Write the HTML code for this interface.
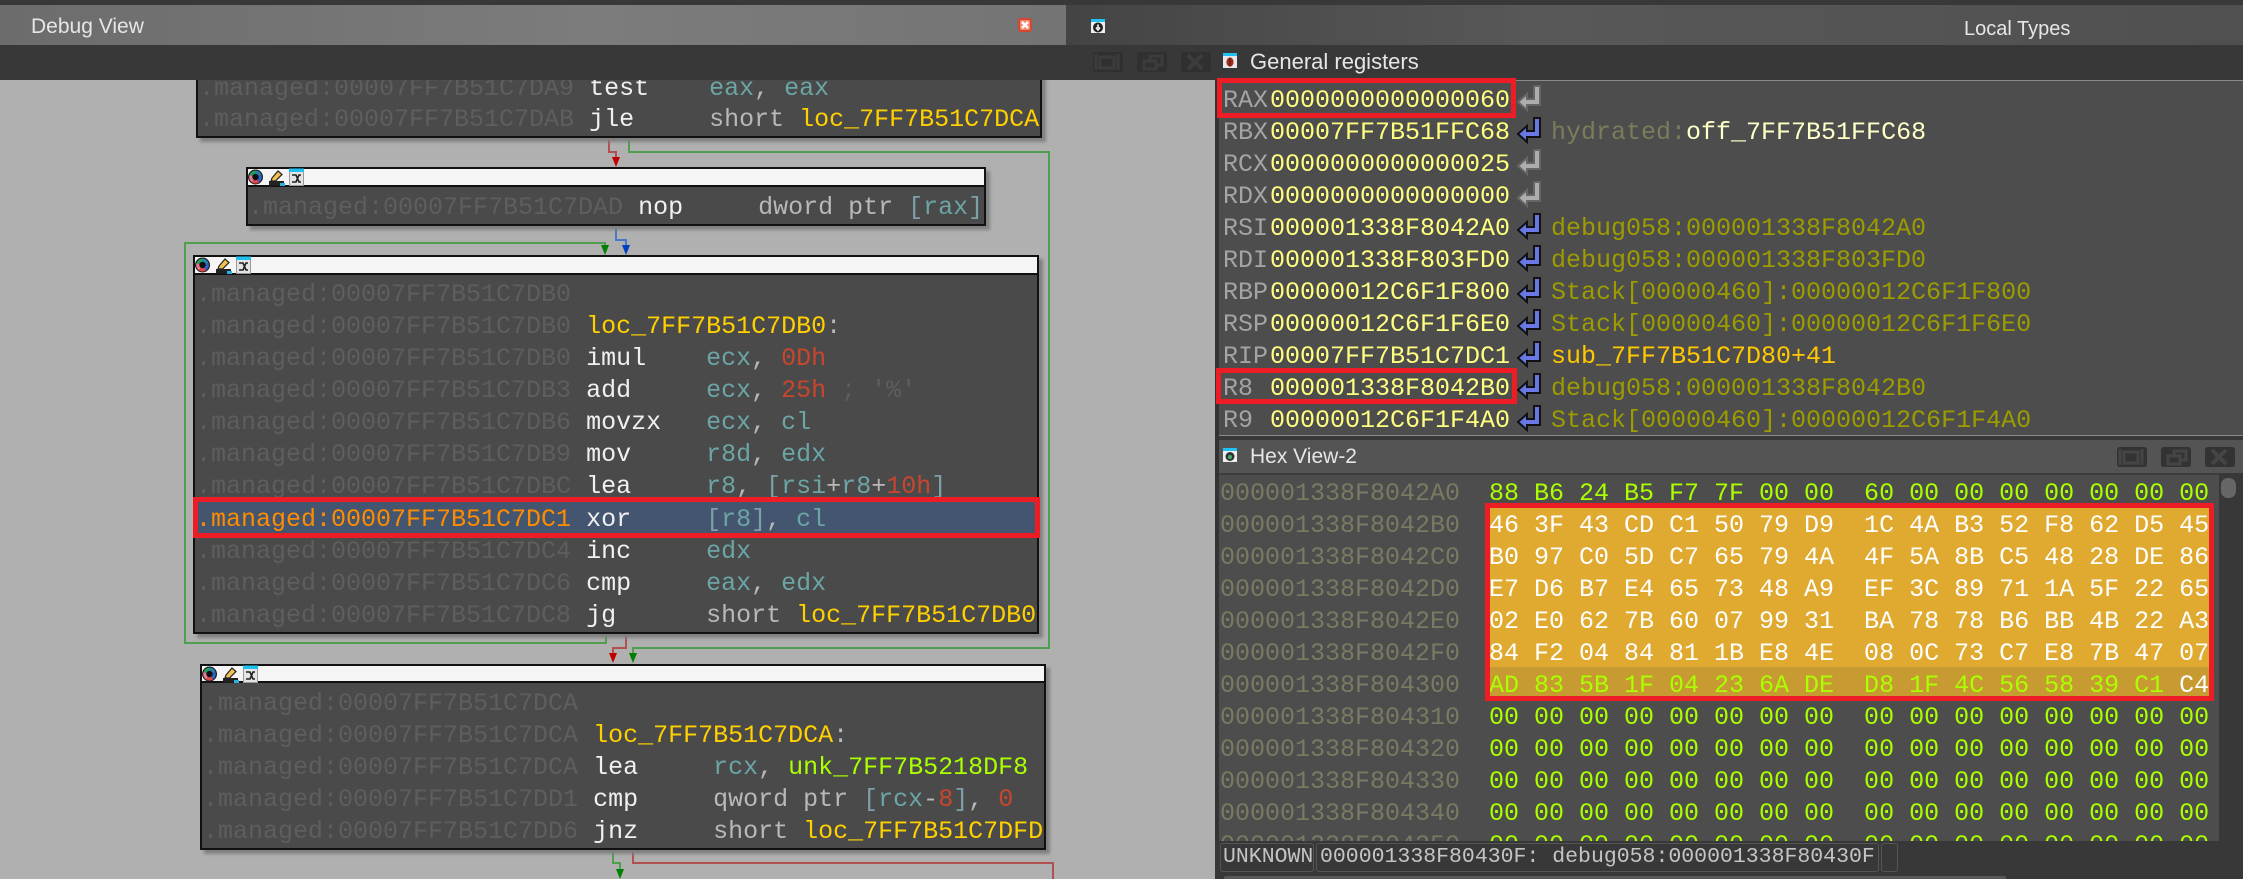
<!DOCTYPE html>
<html><head><meta charset="utf-8"><style>
html,body{margin:0;padding:0;background:#b0b0b0}
#p{position:relative;width:2243px;height:879px;overflow:hidden;background:#b0b0b0;font-family:"Liberation Mono",monospace}
.abs{position:absolute}
.node{position:absolute;background:#4a4a4a;border:2px solid #111;box-sizing:border-box;box-shadow:4px 4px 3px #808080}
.hd{position:absolute;background:#f5f5f5;box-sizing:border-box;border:2px solid #111}
.r{position:absolute;white-space:pre;height:32px;line-height:32px;font-size:25px;color:#f0f0f0}
.a{color:#5e5e5e}.g{color:#6ba5a5}.n{color:#c8462c}.l{color:#ffd000}.t{color:#b8b8b8}.b{color:#7f9fa8}.c{color:#5e5e5e}.u{color:#aaff00}.o{color:#ff8c00}
.q{position:absolute;white-space:pre;height:32px;line-height:32px;font-size:25px}
.rn{color:#a4a4a4}.rv{color:#ffff80}.d{color:#9c9c00}.h{color:#7c7c5c}.w{color:#ffffc8}.s{color:#ffc800}
.x{color:#7a7a62}.y{color:#aaff00}.e{color:#fff}
.ui{position:absolute;font-family:"Liberation Sans",sans-serif;color:#e6e6e6;white-space:pre}
.box{position:absolute;box-sizing:border-box;border:5px solid #ee1c25}
.cell{position:absolute;box-sizing:border-box;border:1px solid #555;border-radius:3px;height:29px;top:843px;line-height:27px;font-size:21.5px;color:#c4c4c4;white-space:pre}
</style></head><body><div id="p">

<svg class="abs" style="left:0;top:0" width="1100" height="879" fill="none" stroke-width="2">
<polyline stroke="#b05050" points="609,137 609,152 616,152 616,158"/>
<polyline stroke="#4f9f4f" points="629,137 629,152 1049,152 1049,648 633,648 633,654"/>
<polyline stroke="#4a78c8" points="616,225 616,240 626,240 626,246"/>
<polyline stroke="#4f9f4f" points="606,633 606,643 185,643 185,243 605,243 605,246"/>
<polyline stroke="#b05050" points="626,633 626,648 613,648 613,654"/>
<polyline stroke="#4f9f4f" points="613,849 613,863 620,863 620,869"/>
<polyline stroke="#b05050" points="633,849 633,863 1053,863 1053,879"/>
<polygon fill="#c00000" stroke="none" points="612,157 620,157 616,167"/>
<polygon fill="#0040c0" stroke="none" points="622,245 630,245 626,255"/>
<polygon fill="#008000" stroke="none" points="601,245 609,245 605,255"/>
<polygon fill="#c00000" stroke="none" points="609,653 617,653 613,663"/>
<polygon fill="#008000" stroke="none" points="629,653 637,653 633,663"/>
<polygon fill="#008000" stroke="none" points="616,869 624,869 620,879"/>
</svg>

<svg width="0" height="0" style="position:absolute">
<symbol id="ic" viewBox="0 0 58 20">
<circle cx="7.5" cy="10" r="7.5" fill="#1a1a1a"/>
<path d="M7.5 3.5A6.5 6.5 0 0 0 1.5 8L7.5 10Z" fill="#20a060"/><path d="M7.5 3.5A6.5 6.5 0 0 1 13.5 8L7.5 10Z" fill="#2a80b0"/><path d="M13.5 8A6.5 6.5 0 0 1 11 15.5L7.5 10Z" fill="#3060c8"/><path d="M11 15.5A6.5 6.5 0 0 1 4 15.5L7.5 10Z" fill="#e04848"/><path d="M4 15.5A6.5 6.5 0 0 1 1.5 8L7.5 10Z" fill="#e87890"/>
<circle cx="7.5" cy="10" r="3.2" fill="#111"/>
<path d="M23 14L24 11L30 4L34 7.5L27.5 14Z" fill="#f0c050" stroke="#222" stroke-width="1.2"/>
<rect x="21" y="14" width="15" height="4.5" fill="#222"/><rect x="32" y="16" width="5" height="3" fill="#30b0e0"/>
<rect x="41.5" y="2.5" width="14" height="16" fill="#e4e4e4" stroke="#999"/><rect x="41" y="1.5" width="15" height="3.5" fill="#20c0f0"/>
<path d="M44 8L48 8L51 15L53 15M44 15L48 15L51 8L53 8" stroke="#222" stroke-width="1.6" fill="none"/>
</symbol>
<symbol id="ab" viewBox="0 0 27 28"><path d="M17 1H23V20H10V25L1 17L10 9V14H17Z" fill="#6a78e6" stroke="#111" stroke-width="2"/></symbol>
<symbol id="ag" viewBox="0 0 27 28"><path d="M17 1H23V20H10V25L1 17L10 9V14H17Z" fill="#aeaeae" stroke="#666" stroke-width="2"/></symbol>
<symbol id="bt" viewBox="0 0 120 20">
<path d="M2 3Q2 0 5 0H29Q32 0 32 3V17Q32 20 29 20H5Q2 20 2 17Z" />
<path d="M46 3Q46 0 49 0H73Q76 0 76 3V17Q76 20 73 20H49Q46 20 46 17Z"/>
<path d="M90 3Q90 0 93 0H117Q120 0 120 3V17Q120 20 117 20H93Q90 20 90 17Z"/>
</symbol>
</svg>

<!-- node 1 -->
<div class="node" style="left:196px;top:60px;width:846px;height:78px"></div>
<div class="r" style="left:199px;top:73px"><span class="a">.managed:00007FF7B51C7DA9</span> test    <span class="g">eax</span><span class="t">,</span> <span class="g">eax</span></div>
<div class="r" style="left:199px;top:104px"><span class="a">.managed:00007FF7B51C7DAB</span> jle     <span class="t">short</span> <span class="l">loc_7FF7B51C7DCA</span></div>

<!-- node 2 -->
<div class="node" style="left:246px;top:167px;width:740px;height:59px"></div>
<div class="hd" style="left:246px;top:167px;width:740px;height:20px"></div>
<svg class="abs" style="left:248px;top:167px" width="58" height="20"><use href="#ic"/></svg>
<div class="r" style="left:248px;top:192px"><span class="a">.managed:00007FF7B51C7DAD</span> nop     <span class="t">dword ptr</span> <span class="b">[</span><span class="g">rax</span><span class="b">]</span></div>

<!-- node 3 -->
<div class="node" style="left:193px;top:255px;width:846px;height:379px"></div>
<div class="hd" style="left:193px;top:255px;width:846px;height:20px"></div>
<svg class="abs" style="left:195px;top:255px" width="58" height="20"><use href="#ic"/></svg>
<div class="r" style="left:196px;top:279px"><span class="a">.managed:00007FF7B51C7DB0</span></div>
<div class="r" style="left:196px;top:311px"><span class="a">.managed:00007FF7B51C7DB0</span> <span class="l">loc_7FF7B51C7DB0</span><span class="t">:</span></div>
<div class="r" style="left:196px;top:343px"><span class="a">.managed:00007FF7B51C7DB0</span> imul    <span class="g">ecx</span><span class="t">,</span> <span class="n">0Dh</span></div>
<div class="r" style="left:196px;top:375px"><span class="a">.managed:00007FF7B51C7DB3</span> add     <span class="g">ecx</span><span class="t">,</span> <span class="n">25h</span> <span class="c">; '%'</span></div>
<div class="r" style="left:196px;top:407px"><span class="a">.managed:00007FF7B51C7DB6</span> movzx   <span class="g">ecx</span><span class="t">,</span> <span class="g">cl</span></div>
<div class="r" style="left:196px;top:439px"><span class="a">.managed:00007FF7B51C7DB9</span> mov     <span class="g">r8d</span><span class="t">,</span> <span class="g">edx</span></div>
<div class="r" style="left:196px;top:471px"><span class="a">.managed:00007FF7B51C7DBC</span> lea     <span class="g">r8</span><span class="t">,</span> <span class="b">[</span><span class="g">rsi</span><span class="t">+</span><span class="g">r8</span><span class="t">+</span><span class="n">10h</span><span class="b">]</span></div>
<div class="abs" style="left:193px;top:497px;width:847px;height:41px;background:#44566f"></div>
<div class="r" style="left:196px;top:504px"><span class="o">.managed:00007FF7B51C7DC1</span> xor     <span class="b">[</span><span class="g">r8</span><span class="b">]</span><span class="t">,</span> <span class="g">cl</span></div>
<div class="box" style="left:193px;top:497px;width:847px;height:41px"></div>
<div class="r" style="left:196px;top:536px"><span class="a">.managed:00007FF7B51C7DC4</span> inc     <span class="g">edx</span></div>
<div class="r" style="left:196px;top:568px"><span class="a">.managed:00007FF7B51C7DC6</span> cmp     <span class="g">eax</span><span class="t">,</span> <span class="g">edx</span></div>
<div class="r" style="left:196px;top:600px"><span class="a">.managed:00007FF7B51C7DC8</span> jg      <span class="t">short</span> <span class="l">loc_7FF7B51C7DB0</span></div>

<!-- node 4 -->
<div class="node" style="left:200px;top:664px;width:846px;height:186px"></div>
<div class="hd" style="left:200px;top:664px;width:846px;height:19px"></div>
<svg class="abs" style="left:202px;top:664px" width="58" height="20"><use href="#ic"/></svg>
<div class="r" style="left:203px;top:688px"><span class="a">.managed:00007FF7B51C7DCA</span></div>
<div class="r" style="left:203px;top:720px"><span class="a">.managed:00007FF7B51C7DCA</span> <span class="l">loc_7FF7B51C7DCA</span><span class="t">:</span></div>
<div class="r" style="left:203px;top:752px"><span class="a">.managed:00007FF7B51C7DCA</span> lea     <span class="g">rcx</span><span class="t">,</span> <span class="u">unk_7FF7B5218DF8</span></div>
<div class="r" style="left:203px;top:784px"><span class="a">.managed:00007FF7B51C7DD1</span> cmp     <span class="t">qword ptr</span> <span class="b">[</span><span class="g">rcx</span><span class="t">-</span><span class="n">8</span><span class="b">]</span><span class="t">,</span> <span class="n">0</span></div>
<div class="r" style="left:203px;top:816px"><span class="a">.managed:00007FF7B51C7DD6</span> jnz     <span class="t">short</span> <span class="l">loc_7FF7B51C7DFD</span></div>

<!-- top chrome -->
<div class="abs" style="left:0;top:0;width:2243px;height:5px;background:#383838"></div>
<div class="abs" style="left:0;top:5px;width:1066px;height:40px;background:linear-gradient(90deg,#6c6c6c,#7c7c7c 55%,#747474)"></div>
<div class="abs" style="left:1066px;top:5px;width:1177px;height:40px;background:linear-gradient(90deg,#444,#585858 40%,#505050)"></div>
<div class="abs" style="left:0;top:45px;width:2243px;height:35px;background:#383838"></div>
<div class="ui" style="left:31px;top:14px;font-size:21px;line-height:26px">Debug View</div>
<svg class="abs" style="left:1018px;top:18px" width="14" height="14"><rect x="1" y="1" width="12" height="12" rx="2" fill="#ee8a70" stroke="#d8452f" stroke-width="2"/><path d="M4 4L10 10M10 4L4 10" stroke="#fff" stroke-width="2.4"/></svg>
<svg class="abs" style="left:1091px;top:19px" width="14" height="14"><rect width="14" height="14" fill="#eee"/><rect width="14" height="3" fill="#20c0f0"/><circle cx="7" cy="8.5" r="5" fill="#222"/><path d="M7 5.5V9M5 8.5L7 11L9 8.5" stroke="#fff" stroke-width="1.6" fill="none"/></svg>
<div class="ui" style="left:1964px;top:16px;font-size:20px;line-height:26px">Local Types</div>
<svg class="abs" style="left:1090px;top:52px" width="122" height="20">
<use href="#bt" fill="#303030"/>
<g fill="none" stroke="#3c3c3c" stroke-width="3"><path d="M10 5H24V16H10ZM6 2V18M28 2V18"/><path d="M54 9H66V17H54ZM60 9V4H72V13H66"/><path d="M98 3L112 17M112 3L98 17" stroke-width="4"/></g>
</svg>
<svg class="abs" style="left:1223px;top:53px" width="14" height="15"><rect width="14" height="15" fill="#e8e8e8"/><rect width="14" height="3" fill="#20c0f0"/><ellipse cx="7" cy="9" rx="3.6" ry="4.6" fill="#a82a1c"/><path d="M7 5V13" stroke="#222"/></svg>
<div class="ui" style="left:1250px;top:49px;font-size:22px;line-height:26px">General registers</div>

<!-- registers pane -->
<div class="abs" style="left:1215px;top:80px;width:1028px;height:361px;background:#4d4d4d;border-left:4px solid #333;box-sizing:border-box"></div>
<div class="abs" style="left:1219px;top:80px;width:1024px;height:1px;background:#8a8a8a"></div>
<div class="abs" style="left:1219px;top:435px;width:1024px;height:1px;background:#8a8a8a"></div>
<div class="abs" style="left:1219px;top:436px;width:1024px;height:4px;background:#383838"></div>

<div class="q rn" style="left:1223px;top:85px">RAX</div><div class="q rv" style="left:1270px;top:85px">0000000000000060</div><svg class="abs" style="left:1517px;top:85px" width="27" height="28"><use href="#ag"/></svg>
<div class="q rn" style="left:1223px;top:117px">RBX</div><div class="q rv" style="left:1270px;top:117px">00007FF7B51FFC68</div><svg class="abs" style="left:1517px;top:117px" width="27" height="28"><use href="#ab"/></svg><div class="q" style="left:1551px;top:117px"><span class="h">hydrated:</span><span class="w">off_7FF7B51FFC68</span></div>
<div class="q rn" style="left:1223px;top:149px">RCX</div><div class="q rv" style="left:1270px;top:149px">0000000000000025</div><svg class="abs" style="left:1517px;top:149px" width="27" height="28"><use href="#ag"/></svg>
<div class="q rn" style="left:1223px;top:181px">RDX</div><div class="q rv" style="left:1270px;top:181px">0000000000000000</div><svg class="abs" style="left:1517px;top:181px" width="27" height="28"><use href="#ag"/></svg>
<div class="q rn" style="left:1223px;top:213px">RSI</div><div class="q rv" style="left:1270px;top:213px">000001338F8042A0</div><svg class="abs" style="left:1517px;top:213px" width="27" height="28"><use href="#ab"/></svg><div class="q d" style="left:1551px;top:213px">debug058:000001338F8042A0</div>
<div class="q rn" style="left:1223px;top:245px">RDI</div><div class="q rv" style="left:1270px;top:245px">000001338F803FD0</div><svg class="abs" style="left:1517px;top:245px" width="27" height="28"><use href="#ab"/></svg><div class="q d" style="left:1551px;top:245px">debug058:000001338F803FD0</div>
<div class="q rn" style="left:1223px;top:277px">RBP</div><div class="q rv" style="left:1270px;top:277px">00000012C6F1F800</div><svg class="abs" style="left:1517px;top:277px" width="27" height="28"><use href="#ab"/></svg><div class="q d" style="left:1551px;top:277px">Stack[00000460]:00000012C6F1F800</div>
<div class="q rn" style="left:1223px;top:309px">RSP</div><div class="q rv" style="left:1270px;top:309px">00000012C6F1F6E0</div><svg class="abs" style="left:1517px;top:309px" width="27" height="28"><use href="#ab"/></svg><div class="q d" style="left:1551px;top:309px">Stack[00000460]:00000012C6F1F6E0</div>
<div class="q rn" style="left:1223px;top:341px">RIP</div><div class="q rv" style="left:1270px;top:341px">00007FF7B51C7DC1</div><svg class="abs" style="left:1517px;top:341px" width="27" height="28"><use href="#ab"/></svg><div class="q s" style="left:1551px;top:341px">sub_7FF7B51C7D80+41</div>
<div class="q rn" style="left:1223px;top:373px">R8</div><div class="q rv" style="left:1270px;top:373px">000001338F8042B0</div><svg class="abs" style="left:1517px;top:373px" width="27" height="28"><use href="#ab"/></svg><div class="q d" style="left:1551px;top:373px">debug058:000001338F8042B0</div>
<div class="q rn" style="left:1223px;top:405px">R9</div><div class="q rv" style="left:1270px;top:405px">00000012C6F1F4A0</div><svg class="abs" style="left:1517px;top:405px" width="27" height="28"><use href="#ab"/></svg><div class="q d" style="left:1551px;top:405px">Stack[00000460]:00000012C6F1F4A0</div>
<div class="box" style="left:1217px;top:78px;width:299px;height:40px"></div>
<div class="box" style="left:1216px;top:368px;width:301px;height:36px"></div>

<!-- hex view -->
<div class="abs" style="left:1215px;top:436px;width:4px;height:405px;background:#333"></div>
<div class="abs" style="left:1219px;top:440px;width:1024px;height:33px;background:#545454"></div>
<div class="abs" style="left:1219px;top:473px;width:1024px;height:2px;background:#3c3c3c"></div>
<div class="abs" style="left:1219px;top:475px;width:1000px;height:366px;background:#4d4d4d"></div>
<div class="abs" style="left:2219px;top:473px;width:24px;height:368px;background:#383838"></div>
<div class="abs" style="left:2221px;top:478px;width:15px;height:20px;background:#666;border-radius:7px"></div>
<svg class="abs" style="left:1223px;top:448px" width="14" height="14"><rect width="14" height="14" fill="#eee"/><rect width="14" height="3" fill="#20c0f0"/><circle cx="7" cy="8.5" r="4.5" fill="#333"/><circle cx="7" cy="9" r="2" fill="#40b070"/></svg>
<div class="ui" style="left:1250px;top:444px;font-size:21px;line-height:26px">Hex View-2</div>
<svg class="abs" style="left:2114px;top:447px" width="122" height="20">
<use href="#bt" fill="#333"/>
<g fill="none" stroke="#454545" stroke-width="3"><path d="M10 5H24V16H10ZM6 2V18M28 2V18"/><path d="M54 9H66V17H54ZM60 9V4H72V13H66"/><path d="M98 3L112 17M112 3L98 17" stroke-width="4"/></g>
</svg>

<div class="abs" style="left:1485px;top:503px;width:729px;height:198px;background:#e0aa30"></div>
<div class="abs" style="left:1485px;top:667px;width:729px;height:30px;background:#c89a32"></div>

<div class="q x" style="left:1220px;top:478px">000001338F8042A0</div><div class="q y" style="left:1489px;top:478px">88 B6 24 B5 F7 7F 00 00  60 00 00 00 00 00 00 00</div>
<div class="q x" style="left:1220px;top:510px">000001338F8042B0</div><div class="q e" style="left:1489px;top:510px">46 3F 43 CD C1 50 79 D9  1C 4A B3 52 F8 62 D5 45</div>
<div class="q x" style="left:1220px;top:542px">000001338F8042C0</div><div class="q e" style="left:1489px;top:542px">B0 97 C0 5D C7 65 79 4A  4F 5A 8B C5 48 28 DE 86</div>
<div class="q x" style="left:1220px;top:574px">000001338F8042D0</div><div class="q e" style="left:1489px;top:574px">E7 D6 B7 E4 65 73 48 A9  EF 3C 89 71 1A 5F 22 65</div>
<div class="q x" style="left:1220px;top:606px">000001338F8042E0</div><div class="q e" style="left:1489px;top:606px">02 E0 62 7B 60 07 99 31  BA 78 78 B6 BB 4B 22 A3</div>
<div class="q x" style="left:1220px;top:638px">000001338F8042F0</div><div class="q e" style="left:1489px;top:638px">84 F2 04 84 81 1B E8 4E  08 0C 73 C7 E8 7B 47 07</div>
<div class="q x" style="left:1220px;top:670px">000001338F804300</div><div class="q y" style="left:1489px;top:670px">AD 83 5B 1F 04 23 6A DE  D8 1F 4C 56 58 39 C1 <span class="e">C4</span></div>
<div class="q x" style="left:1220px;top:702px">000001338F804310</div><div class="q y" style="left:1489px;top:702px">00 00 00 00 00 00 00 00  00 00 00 00 00 00 00 00</div>
<div class="q x" style="left:1220px;top:734px">000001338F804320</div><div class="q y" style="left:1489px;top:734px">00 00 00 00 00 00 00 00  00 00 00 00 00 00 00 00</div>
<div class="q x" style="left:1220px;top:766px">000001338F804330</div><div class="q y" style="left:1489px;top:766px">00 00 00 00 00 00 00 00  00 00 00 00 00 00 00 00</div>
<div class="q x" style="left:1220px;top:798px">000001338F804340</div><div class="q y" style="left:1489px;top:798px">00 00 00 00 00 00 00 00  00 00 00 00 00 00 00 00</div>
<div class="q x" style="left:1220px;top:830px">000001338F804350</div><div class="q y" style="left:1489px;top:830px">00 00 00 00 00 00 00 00  00 00 00 00 00 00 00 00</div>
<div class="box" style="left:1485px;top:503px;width:729px;height:198px"></div>

<!-- status -->
<div class="abs" style="left:1215px;top:841px;width:1028px;height:38px;background:#383838"></div>
<div class="cell" style="left:1220px;width:94px;padding-left:2px">UNKNOWN</div>
<div class="cell" style="left:1316px;width:563px;padding-left:3px">000001338F80430F: debug058:000001338F80430F</div>
<div class="cell" style="left:1881px;width:17px"></div>
<div class="abs" style="left:1224px;top:876px;width:782px;height:3px;background:#585858;border-radius:2px 2px 0 0"></div>
</div></body></html>
